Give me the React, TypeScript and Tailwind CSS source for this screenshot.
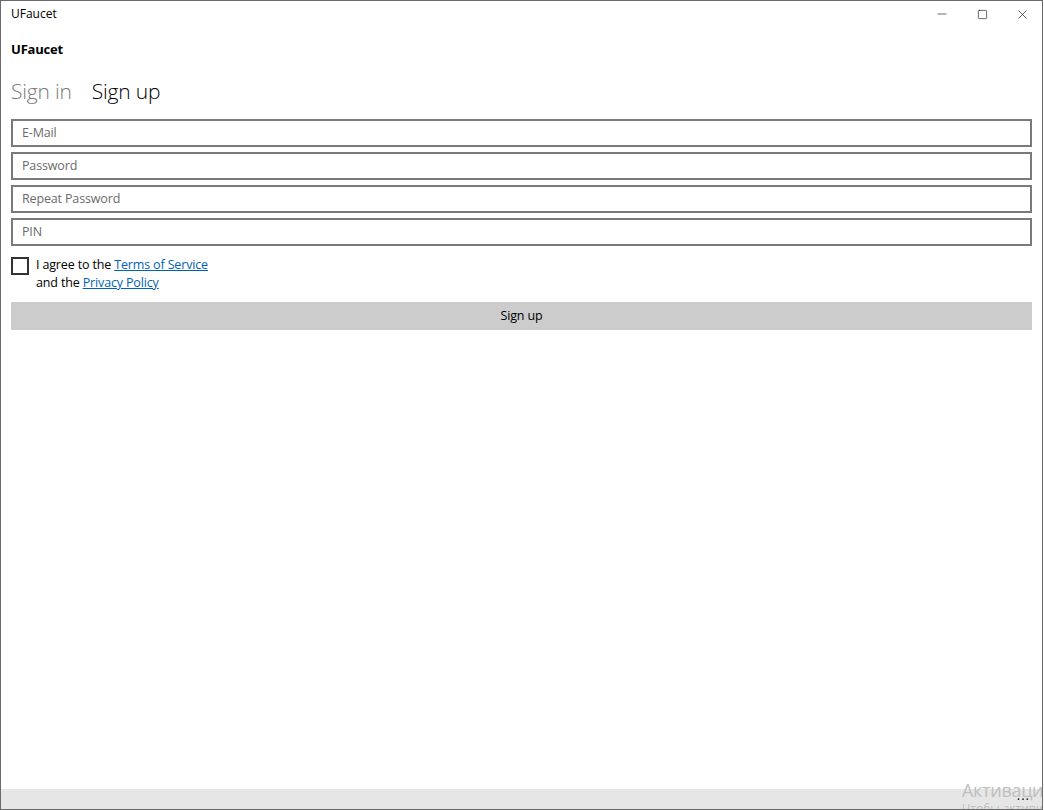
import { Minus, Square, X } from "lucide-react";

const fields = ["E-Mail", "Password", "Repeat Password", "PIN"];

const TitleBar = () => (
  <div className="flex h-[26px] items-center justify-between">
    <span className="pl-[10px] text-[12px] text-black">UFaucet</span>
    <div className="flex h-full">
      <button className="flex w-10 items-center justify-center text-black">
        <Minus className="h-[14px] w-[14px]" strokeWidth={1} />
      </button>
      <button className="flex w-10 items-center justify-center text-black">
        <Square className="h-[11px] w-[11px]" strokeWidth={1.3} />
      </button>
      <button className="flex w-10 items-center justify-center text-black">
        <X className="h-[15px] w-[15px]" strokeWidth={1} />
      </button>
    </div>
  </div>
);

export default function App() {
  return (
    <div
      className="relative flex h-[810px] w-[1043px] flex-col overflow-hidden border border-[#6a6a6a] bg-white"
      style={{ fontFamily: '"Open Sans", "Noto Sans", sans-serif' }}
    >
      <TitleBar />

      <div className="flex flex-1 flex-col px-[10px]">
        <div className="mt-[13px] text-[13px] font-bold leading-[18px] tracking-[-0.2px] text-black">UFaucet</div>

        {/* pivot headers */}
        <div className="mt-[20px] flex gap-[20px] text-[21px] font-light leading-[26px] tracking-[-0.2px]">
          <span className="text-[#7a7a7a]">Sign in</span>
          <span className="text-black">Sign up</span>
        </div>

        <div className="mt-[15px] flex flex-col gap-[5px]">
          {fields.map((f) => (
            <div
              key={f}
              className="flex h-[28px] items-center border-2 border-[#7a7a7a] px-[9px] text-[12.5px] tracking-[-0.15px] text-[#6b6b6b]"
            >
              {f}
            </div>
          ))}
        </div>

        <div className="mt-[10px] flex items-start gap-[7px]">
          <div className="mt-[1px] h-[18px] w-[18px] border-2 border-[#333333]" />
          <div className="text-[12.5px] leading-[18px] tracking-[-0.15px] text-black">
            <div>
              I agree to the <span className="text-[#0063b1] underline">Terms of Service</span>
            </div>
            <div>
              and the <span className="text-[#0063b1] underline">Privacy Policy</span>
            </div>
          </div>
        </div>

        <button className="mt-[10px] flex h-[28px] w-full items-center justify-center bg-[#cccccc] text-[12.5px] tracking-[-0.15px] text-black">
          Sign up
        </button>
      </div>

      {/* app bar */}
      <div className="flex h-[20px] items-start justify-end bg-[#e6e6e6] pr-[12px]">
        <span className="text-[13px] leading-[12px] tracking-[1px] text-black">...</span>
      </div>

      {/* activation watermark */}
      <div className="pointer-events-none absolute left-[961px] top-[778px] whitespace-nowrap text-[#bfbfbf]">
        <div className="text-[18px] leading-[23px] tracking-[-0.3px]">Активация Windows</div>
        <div className="text-[12px] leading-[14px]">Чтобы активировать Windows</div>
      </div>
    </div>
  );
}
